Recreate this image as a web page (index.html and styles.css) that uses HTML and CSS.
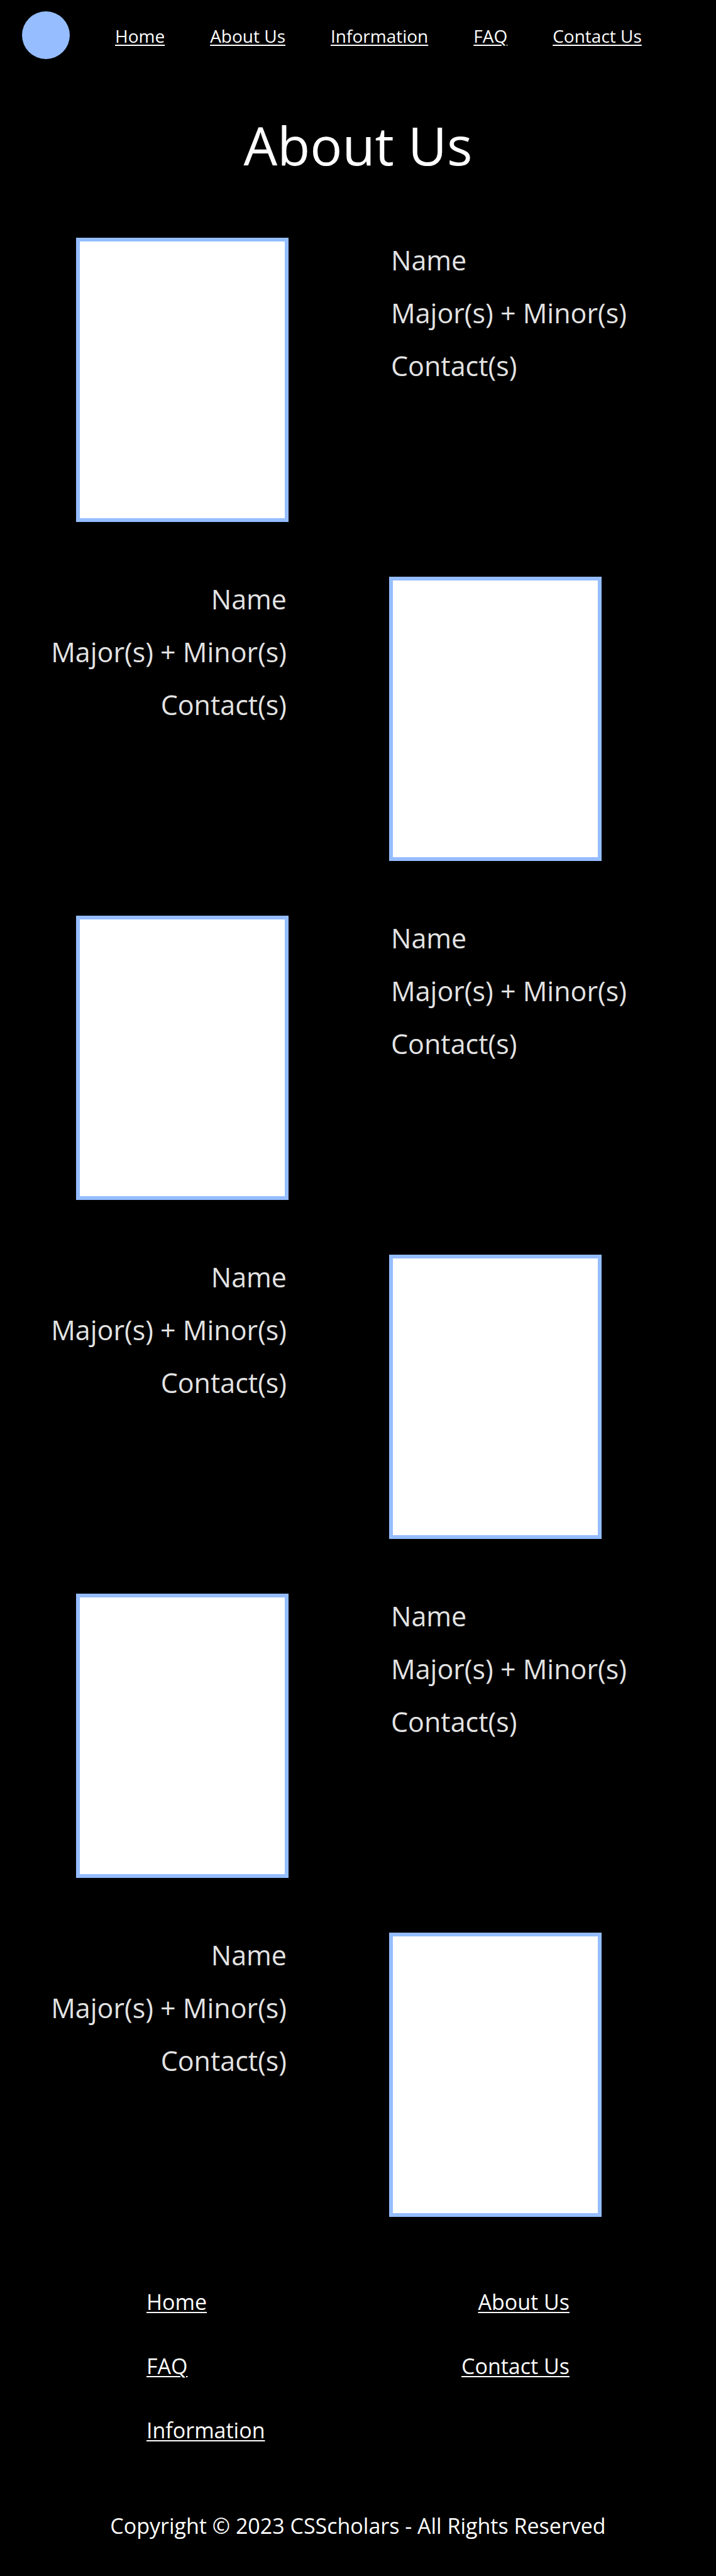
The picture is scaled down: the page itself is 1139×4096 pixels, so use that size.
FILE: index.html
```html
<!DOCTYPE html>
<html lang="en">
<head>
  <meta charset="utf-8">
  <meta name="viewport" content="width=device-width, initial-scale=1">
  <title>About Us</title>
  <link rel="stylesheet" href="styles.css">
</head>
<body>
  <header class="site-header">
    <div class="logo"></div>
    <nav class="site-nav">
      <a href="#home">Home</a>
      <a href="#about">About Us</a>
      <a href="#information">Information</a>
      <a href="#faq">FAQ</a>
      <a href="#contact">Contact Us</a>
    </nav>
  </header>

  <main>
    <h1 class="page-title">About Us</h1>
    <div class="members">
      <section class="member">
        <div class="photo"></div>
        <div class="details"><p>Name</p><p>Major(s) + Minor(s)</p><p>Contact(s)</p></div>
      </section>
      <section class="member">
        <div class="details"><p>Name</p><p>Major(s) + Minor(s)</p><p>Contact(s)</p></div>
        <div class="photo"></div>
      </section>
      <section class="member">
        <div class="photo"></div>
        <div class="details"><p>Name</p><p>Major(s) + Minor(s)</p><p>Contact(s)</p></div>
      </section>
      <section class="member">
        <div class="details"><p>Name</p><p>Major(s) + Minor(s)</p><p>Contact(s)</p></div>
        <div class="photo"></div>
      </section>
      <section class="member">
        <div class="photo"></div>
        <div class="details"><p>Name</p><p>Major(s) + Minor(s)</p><p>Contact(s)</p></div>
      </section>
      <section class="member">
        <div class="details"><p>Name</p><p>Major(s) + Minor(s)</p><p>Contact(s)</p></div>
        <div class="photo"></div>
      </section>
    </div>
  </main>

  <footer class="site-footer">
    <nav class="footer-nav">
      <div class="footer-column">
        <a href="#home">Home</a>
        <a href="#faq">FAQ</a>
        <a href="#information">Information</a>
      </div>
      <div class="footer-column footer-column-end">
        <a href="#about">About Us</a>
        <a href="#contact">Contact Us</a>
      </div>
    </nav>
    <p class="copyright">Copyright © 2023 CSScholars - All Rights Reserved</p>
  </footer>
</body>
</html>
```

FILE: styles.css
```css
* {
  box-sizing: border-box;
}

body {
  margin: 0;
  background: #000;
  color: #fff;
  font-family: "Segoe UI", "Open Sans", "Noto Sans", sans-serif;
}

h1,
p {
  margin: 0;
  font-weight: 400;
}

a {
  color: inherit;
  text-decoration-thickness: 2px;
  text-underline-offset: 3px;
}

.site-header {
  display: flex;
  align-items: center;
  gap: 72px;
  padding: 18px 35px;
}

.logo {
  flex: none;
  width: 76px;
  height: 76px;
  border-radius: 50%;
  background: #95bdff;
}

.site-nav {
  display: flex;
  gap: 72px;
  padding-top: 2px;
  font-size: 28px;
  line-height: 40px;
  white-space: nowrap;
}

.page-title {
  padding: 58px 0 88px;
  font-size: 85px;
  line-height: 120px;
  text-align: center;
}

.members {
  display: grid;
  gap: 87px;
}

/* Photo and details swap sides on every other row */
.member {
  display: grid;
  grid-template-columns: 459fr 520fr;
  column-gap: 160px;
}

.photo {
  width: 338px;
  height: 452px;
  border: 6px solid #95bdff;
  background: #fff;
}

.photo:first-child {
  justify-self: end;
}

.details {
  display: flex;
  flex-direction: column;
  gap: 24px;
  padding: 6px 3px 0;
  color: #e3e3e3;
  font-size: 43px;
  line-height: 60px;
}

.details:first-child {
  text-align: right;
}

.site-footer {
  padding: 111px 0 56px;
  font-size: 34px;
  line-height: 48px;
}

.footer-nav {
  display: flex;
  justify-content: space-between;
  padding: 0 233px;
}

.footer-column {
  display: flex;
  flex-direction: column;
  align-items: flex-start;
  gap: 54px;
}

.footer-column-end {
  align-items: flex-end;
}

.copyright {
  padding-top: 104px;
  text-align: center;
}
```
